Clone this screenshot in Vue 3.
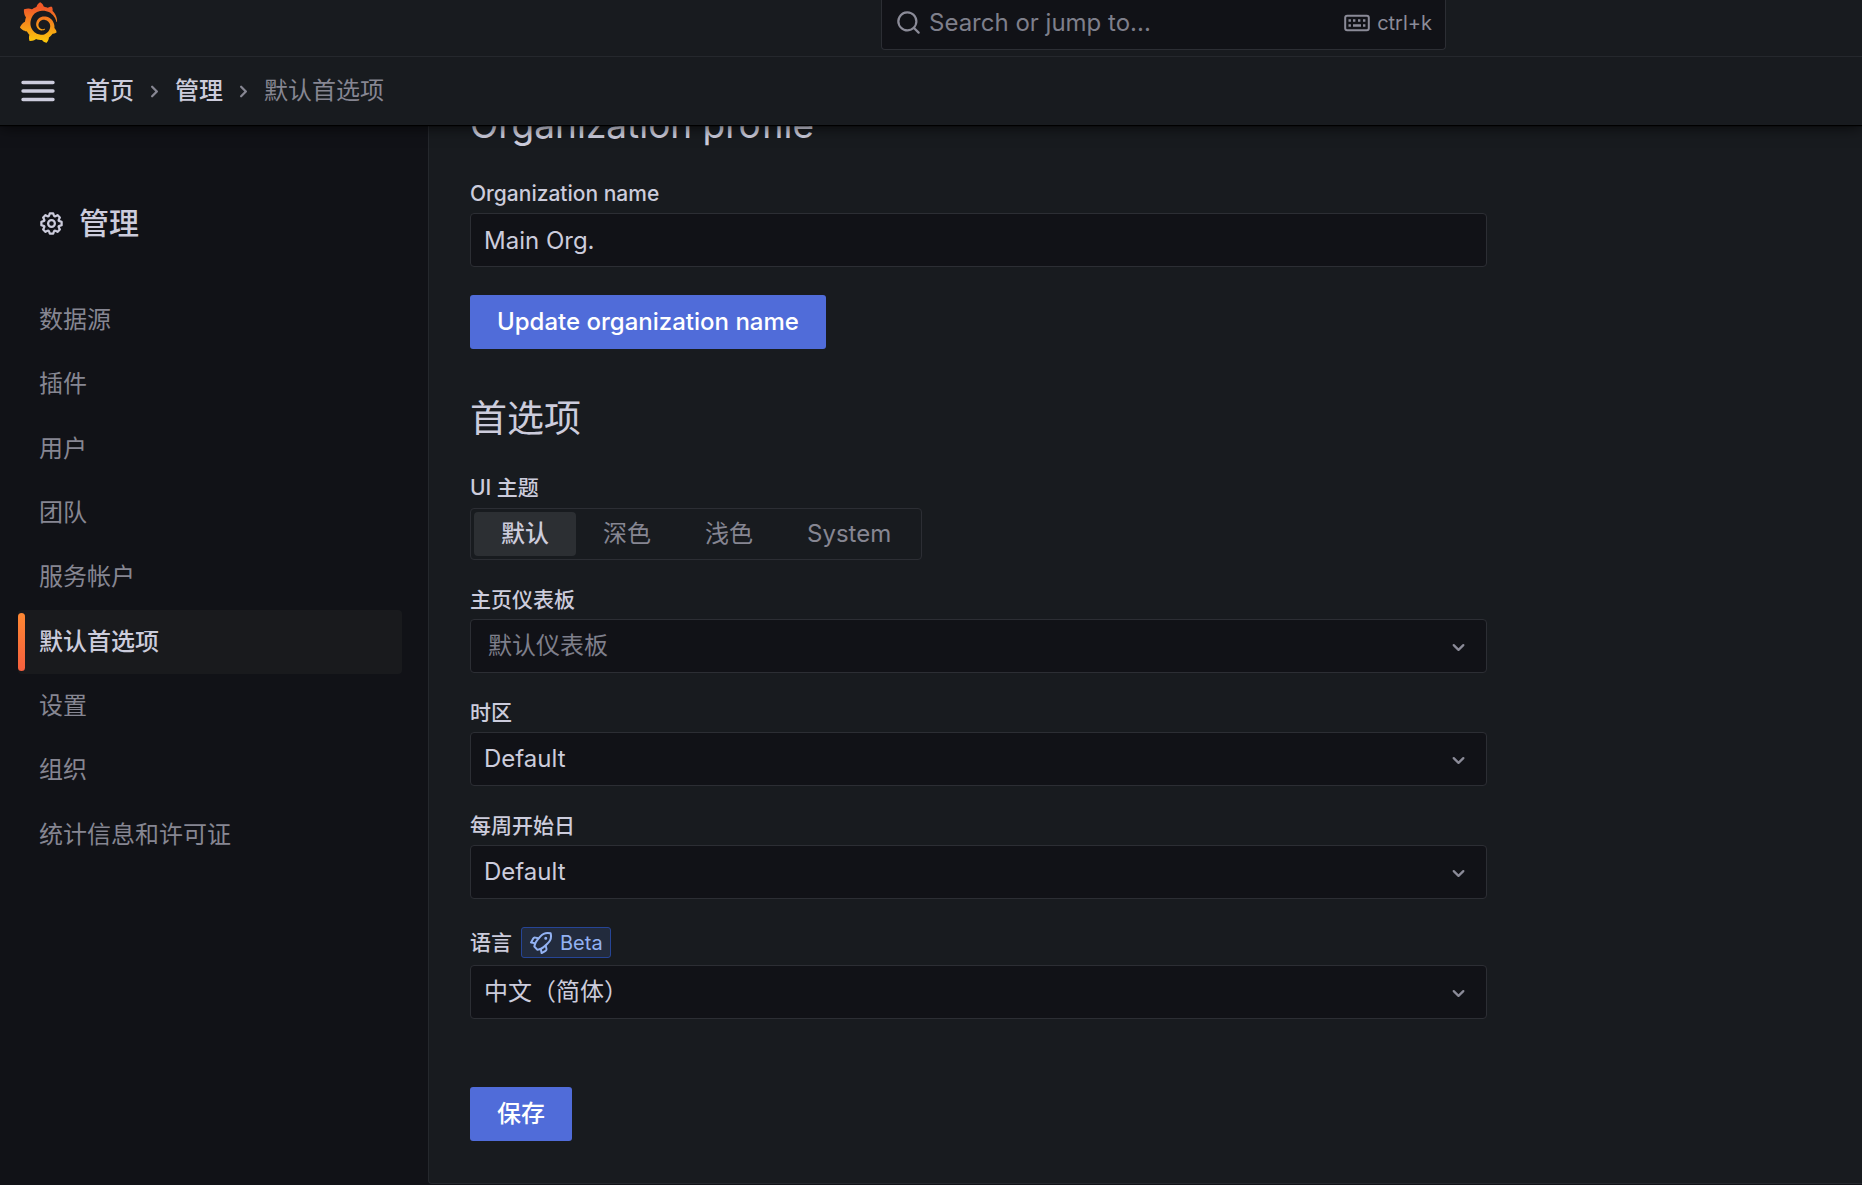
<template>
  <div class="app">
    <header class="top">
      <div class="top-bar">
        <a href="#" class="logo" aria-label="Grafana">
          <svg viewBox="0 0 351 365" width="39" height="41">
            <defs>
              <linearGradient id="logo-fill" x1="0" y1="1" x2="0" y2="0">
                <stop offset="0" stop-color="#fbca0a" />
                <stop offset="0.85" stop-color="#f05a28" />
              </linearGradient>
            </defs>
            <path fill="url(#logo-fill)" :d="logoPath" />
          </svg>
        </a>
        <label class="search">
          <svg class="icon" viewBox="0 0 24 24" width="27" height="27"><path :d="icons.search" /></svg>
          <input v-model="keyword" type="text" placeholder="Search or jump to..." aria-label="Search" />
          <span class="shortcut">
            <svg viewBox="0 0 26 18" width="26" height="18">
              <rect x="1.2" y="1.7" width="23.6" height="14.6" rx="2" fill="none" stroke="currentColor" stroke-width="2" />
              <path d="M4.5 6.5h2.4M9 6.5h2.4M14 6.5h2.4M19 6.5h2.4M4.5 11.5h2.4M9 11.5h8M19 11.5h2.4" fill="none" stroke="currentColor" stroke-width="2.4" />
            </svg>
            ctrl+k
          </span>
        </label>
      </div>
      <div class="crumb-bar">
        <button class="menu-btn" type="button" aria-label="菜单">
          <svg viewBox="0 0 34 22" width="34" height="22">
            <path d="M2 2.5h30M2 11h30M2 19.5h30" stroke="currentColor" stroke-width="3.4" stroke-linecap="round" />
          </svg>
        </button>
        <nav class="crumbs">
          <a href="#">首页</a>
          <svg viewBox="0 0 24 24" width="27" height="27"><path :d="icons.right" /></svg>
          <a href="#">管理</a>
          <svg viewBox="0 0 24 24" width="27" height="27"><path :d="icons.right" /></svg>
          <span>默认首选项</span>
        </nav>
      </div>
    </header>

    <div class="body">
      <aside class="sidebar">
        <h2 class="side-title">
          <svg viewBox="0 0 24 24" width="27" height="27"><path :d="icons.cog" /></svg>
          管理
        </h2>
        <ul class="side-list">
          <li v-for="item in navItems" :key="item">
            <a href="#" :class="{ active: item === activeItem }" @click.prevent="activeItem = item">{{ item }}</a>
          </li>
        </ul>
      </aside>

      <main class="panel">
        <form class="content" @submit.prevent>
          <h1>Organization profile</h1>
          <div class="field">
            <label for="org-name">Organization name</label>
            <input id="org-name" v-model="orgName" class="control" type="text" />
          </div>
          <button class="primary" type="submit">Update organization name</button>
        </form>

        <form class="content" @submit.prevent>
          <h1 class="second">首选项</h1>
          <fieldset class="field">
            <legend>UI 主题</legend>
            <div class="radio-group">
              <label v-for="t in themes" :key="t" :class="{ checked: theme === t }">
                <input v-model="theme" type="radio" name="theme" :value="t" />
                {{ t }}
              </label>
            </div>
          </fieldset>
          <div v-for="f in selects" :key="f.id" class="field">
            <div class="label-row">
              <label :for="f.id">{{ f.label }}</label>
              <span v-if="f.beta" class="badge">
                <svg viewBox="0 0 24 24" width="24" height="24"><path :d="icons.rocket" /></svg>
                Beta
              </span>
            </div>
            <div class="select-wrap">
              <select :id="f.id" v-model="f.value" class="control" :class="{ placeholder: f.placeholder }">
                <option>{{ f.value }}</option>
              </select>
              <svg class="arrow" viewBox="0 0 24 24" width="27" height="27"><path :d="icons.down" /></svg>
            </div>
          </div>
          <button class="primary save" type="submit">保存</button>
        </form>
      </main>
    </div>
  </div>
</template>

<script setup>
import { ref } from 'vue';

const keyword = ref('');
const orgName = ref('Main Org.');

const navItems = ['数据源', '插件', '用户', '团队', '服务帐户', '默认首选项', '设置', '组织', '统计信息和许可证'];
const activeItem = ref('默认首选项');

const themes = ['默认', '深色', '浅色', 'System'];
const theme = ref('默认');

const selects = ref([
  { id: 'home-dashboard', label: '主页仪表板', value: '默认仪表板', placeholder: true },
  { id: 'timezone', label: '时区', value: 'Default' },
  { id: 'week-start', label: '每周开始日', value: 'Default' },
  { id: 'language', label: '语言', value: '中文（简体）', beta: true },
]);

const icons = {
  search: 'M21.71,20.29,18,16.61A9,9,0,1,0,16.61,18l3.68,3.68a1,1,0,0,0,1.42,0A1,1,0,0,0,21.71,20.29ZM11,18a7,7,0,1,1,7-7A7,7,0,0,1,11,18Z',
  right: 'M14.83,11.29,10.59,7.05a1,1,0,0,0-1.42,0,1,1,0,0,0,0,1.41L12.71,12,9.17,15.54a1,1,0,0,0,0,1.41,1,1,0,0,0,.71.29,1,1,0,0,0,.71-.29l4.24-4.24A1,1,0,0,0,14.83,11.29Z',
  down: 'M17,9.17a1,1,0,0,0-1.41,0L12,12.71,8.46,9.17a1,1,0,0,0-1.41,0,1,1,0,0,0,0,1.42l4.24,4.24a1,1,0,0,0,1.42,0L17,10.59A1,1,0,0,0,17,9.17Z',
  cog: 'M21.32,9.55l-1.89-.63.89-1.78A1,1,0,0,0,20.13,6L18,3.87a1,1,0,0,0-1.15-.19l-1.78.89-.63-1.89A1,1,0,0,0,13.5,2h-3a1,1,0,0,0-.95.68L8.92,4.57,7.14,3.68A1,1,0,0,0,6,3.87L3.87,6a1,1,0,0,0-.19,1.15l.89,1.78-1.89.63A1,1,0,0,0,2,10.5v3a1,1,0,0,0,.68.95l1.89.63-.89,1.78A1,1,0,0,0,3.87,18L6,20.13a1,1,0,0,0,1.15.19l1.78-.89.63,1.89a1,1,0,0,0,.95.68h3a1,1,0,0,0,.95-.68l.63-1.89,1.78.89A1,1,0,0,0,18,20.13L20.13,18a1,1,0,0,0,.19-1.15l-.89-1.78,1.89-.63A1,1,0,0,0,22,13.5v-3A1,1,0,0,0,21.32,9.55ZM20,12.78l-1.2.4A2,2,0,0,0,17.64,16l.57,1.14-1.1,1.1L16,17.64a2,2,0,0,0-2.79,1.16l-.4,1.2H11.22l-.4-1.2A2,2,0,0,0,8,17.64l-1.14.57-1.1-1.1L6.36,16A2,2,0,0,0,5.2,13.18L4,12.78V11.22l1.2-.4A2,2,0,0,0,6.36,8L5.79,6.89l1.1-1.1L8,6.36A2,2,0,0,0,10.82,5.2l.4-1.2h1.56l.4,1.2A2,2,0,0,0,16,6.36l1.14-.57,1.1,1.1L17.64,8a2,2,0,0,0,1.16,2.79l1.2.4ZM12,8a4,4,0,1,0,4,4A4,4,0,0,0,12,8Zm0,6a2,2,0,1,1,2-2A2,2,0,0,1,12,14Z',
  rocket: 'M22.6 2.06a1 1 0 0 0-.71-.71A11.25 11.25 0 0 0 10.47 4.97L9.35 6.3 6.75 5.67a2.78 2.78 0 0 0-3.39 1.36l-2.2 3.9a1 1 0 0 0 .66 1.47l3.07.66a13.42 13.42 0 0 0-.55 2.43 1 1 0 0 0 .28.84l3.1 3.1a1 1 0 0 0 .71.29h.09a12.17 12.17 0 0 0 2.49-.49l.64 3a1 1 0 0 0 1.47.66l3.9-2.2a3.04 3.04 0 0 0 1.38-3.3l-.67-2.76 1.24-1.14A11.2 11.2 0 0 0 22.6 2.06ZM3.57 10.72l1.56-2.76a.83.83 0 0 1 1.07-.37l1.72.41-.65.77a13.1 13.1 0 0 0-1.59 2.4Zm12.47 8.23-2.71 1.53-.43-2.01a11.34 11.34 0 0 0 2.41-1.62l.74-.68.41 1.66a1.04 1.04 0 0 1-.42 1.12Zm1.62-6.97-3.69 3.39a9.77 9.77 0 0 1-5.17 2.3l-2.4-2.4a10.93 10.93 0 0 1 2.4-5.21l1.68-1.99.08-.09L11.99 6.27a9.28 9.28 0 0 1 8.81-3.12 9.22 9.22 0 0 1-3.14 8.83Zm-.92-6.16a1.5 1.5 0 1 0 1.5 1.5 1.5 1.5 0 0 0-1.5-1.5Z',
};

const logoPath = 'M342,161.2c-0.6-6.1-1.6-13.1-3.6-20.9c-2-7.7-5-16.2-9.4-25c-4.4-8.8-10.1-17.9-17.5-26.8c-2.9-3.5-6.1-6.9-9.5-10.2c5.1-20.3-6.2-37.9-6.2-37.9c-19.5-1.2-31.9,6.1-36.5,9.4c-0.8-0.3-1.5-0.7-2.3-1c-3.3-1.3-6.7-2.6-10.3-3.7c-3.5-1.1-7.1-2.1-10.8-3c-3.7-0.9-7.4-1.6-11.2-2.2c-0.7-0.1-1.3-0.2-2-0.3c-8.5-27.2-32.9-38.6-32.9-38.6c-27.3,17.3-32.4,41.5-32.4,41.5s-0.1,0.5-0.3,1.4c-1.5,0.4-3,0.9-4.5,1.3c-2.1,0.6-4.2,1.4-6.2,2.2c-2.1,0.8-4.1,1.6-6.2,2.5c-4.1,1.8-8.2,3.8-12.2,6c-3.9,2.2-7.7,4.6-11.4,7.1c-0.5-0.2-1-0.4-1-0.4c-37.8-14.4-71.3,2.9-71.3,2.9c-3.1,40.2,15.1,65.5,18.7,70.1c-0.9,2.5-1.7,5-2.5,7.5c-2.8,9.1-4.9,18.4-6.2,28.1c-0.2,1.4-0.4,2.8-0.5,4.2C18.8,192.7,8.5,228,8.5,228c29.1,33.5,63.1,35.6,63.1,35.6c0,0,0.1-0.1,0.1-0.1c4.3,7.7,9.3,15,14.9,21.9c2.4,2.9,4.8,5.6,7.4,8.3c-10.6,30.4,1.5,55.6,1.5,55.6c32.4,1.2,53.7-14.2,58.2-17.7c3.2,1.1,6.5,2.1,9.8,2.9c10,2.6,20.2,4.1,30.4,4.5c2.5,0.1,5.1,0.2,7.6,0.1l1.2,0l0.8,0l1.6,0l1.6-0.1l0,0.1c15.3,21.8,42.1,24.9,42.1,24.9c19.1-20.1,20.2-40.1,20.2-44.4l0,0c0,0,0-0.1,0-0.3c0-0.4,0-0.6,0-0.6l0,0c0-0.3,0-0.6,0-0.9c4-2.8,7.8-5.8,11.4-9.1c7.6-6.9,14.3-14.8,19.9-23.3c0.5-0.8,1-1.6,1.5-2.4c21.6,1.2,36.9-13.4,36.9-13.4c-3.6-22.5-16.4-33.5-19.1-35.6l0,0c0,0-0.1-0.1-0.3-0.2c-0.2-0.1-0.2-0.2-0.2-0.2c-0.1-0.1-0.3-0.2-0.5-0.3c0.1-1.4,0.2-2.7,0.3-4.1c0.2-2.4,0.2-4.9,0.2-7.3l0-1.8l0-0.9l0-0.5l-0.1-2.1l-0.1-2c0-0.7-0.1-1.3-0.2-1.9c-0.1-0.6-0.1-1.3-0.2-1.9l-0.2-1.9l-0.3-1.9c-0.4-2.5-0.8-4.9-1.4-7.4c-2.3-9.7-6.1-18.9-11-27.2c-5-8.3-11.2-15.6-18.3-21.8c-7-6.2-14.9-11.2-23.1-14.9c-8.3-3.7-16.9-6.1-25.5-7.2c-4.3-0.6-8.6-0.8-12.9-0.7l-3.2,0l-1.6,0.1c-0.6,0-1.2,0.1-1.7,0.1c-2.2,0.2-4.4,0.5-6.5,0.9c-8.6,1.6-16.7,4.7-23.8,9c-7.1,4.3-13.3,9.6-18.3,15.6c-5,6-8.9,12.7-11.6,19.6c-2.7,6.9-4.2,14.1-4.6,21c-0.1,1.7-0.1,3.5-0.1,5.2c0,0.4,0,0.9,0,1.3l0.1,1.4c0.1,0.8,0.1,1.7,0.2,2.5c0.3,3.5,1,6.9,1.9,10.1c1.9,6.5,4.9,12.4,8.6,17.4c3.7,5,8.2,9.1,12.9,12.4c4.7,3.2,9.8,5.5,14.8,7c5,1.5,10,2.1,14.7,2.1c1.8,0,3.5-0.1,5.5-0.2c1.5-0.2,3.3-0.5,5-0.8c1.1-0.2,2.1-0.6,3.1-0.9c2-0.7,4-1.5,5.7-2.4c1.8-0.9,3.4-2,5-3c0.4-0.3,0.9-0.6,1.3-1c1.6-1.3,1.9-3.7,0.6-5.3c-1.1-1.4-3.1-1.8-4.7-0.9c-0.4,0.2-0.8,0.4-1.2,0.6c-1.4,0.7-2.8,1.3-4.3,1.8c-1.5,0.5-3.1,0.9-4.7,1.2c-0.8,0.1-1.6,0.2-2.5,0.3c-1.7,0.1-3.3,0.1-5.2,0c-0.9,0-1.8-0.2-2.6-0.3c-3.7-0.5-7.4-1.6-10.9-3.2c-3.6-1.6-7-3.8-10.1-6.6c-3.1-2.8-5.8-6.1-7.9-9.9c-2.1-3.8-3.6-8-4.3-12.4c-0.3-2.2-0.5-4.5-0.4-6.7c0-1.2,0.1-2.3,0.2-3.5c0.1-1.2,0.3-2.4,0.5-3.6c1.7-9.6,6.5-19,13.9-26.1c1.9-1.8,3.9-3.4,6-4.9c2.1-1.5,4.4-2.8,6.8-3.9c2.4-1.1,4.8-2,7.4-2.7c2.5-0.7,5.1-1.1,7.8-1.4c1.3-0.1,2.6-0.2,4-0.2l2.7,0l1.4,0.1c2.9,0.2,5.7,0.6,8.5,1.3c5.6,1.2,11.1,3.3,16.2,6.1c10.2,5.7,18.9,14.5,24.2,25.1c2.7,5.3,4.6,11,5.5,16.9c0.2,1.5,0.4,3,0.5,4.5l0.2,2.2l0,4.3c0,0.7-0.1,1.9-0.1,2.6c-0.1,1.6-0.3,3.3-0.5,4.9c-0.2,1.6-0.5,3.2-0.8,4.8c-0.3,1.6-0.7,3.2-1.1,4.7c-0.8,3.1-1.8,6.2-3,9.3c-2.4,6-5.6,11.8-9.4,17.1c-7.7,10.6-18.2,19.2-30.2,24.7c-6,2.7-12.3,4.7-18.8,5.7c-3.2,0.6-6.5,0.9-9.8,1l-4.6,0c-1.8,0-3.5-0.1-5.3-0.3c-7-0.5-13.9-1.8-20.7-3.7c-6.7-1.9-13.2-4.6-19.4-7.8c-12.3-6.6-23.4-15.6-32-26.5c-4.3-5.4-8.1-11.3-11.2-17.4c-3.1-6.1-5.6-12.6-7.4-19.1c-1.8-6.6-2.9-13.3-3.4-20.1l-0.1-1.9l0-5.8c0-0.8,0-1.7,0-2.5c0.1-3.3,0.4-6.8,0.8-10.2c0.4-3.4,1-6.9,1.7-10.3c0.7-3.4,1.5-6.8,2.5-10.2c1.9-6.7,4.3-13.2,7.1-19.3c5.7-12.2,13.1-23.1,22-31.8c2.2-2.2,4.5-4.2,6.9-6.2c2.4-1.9,4.9-3.7,7.5-5.4c2.5-1.7,5.2-3.2,7.9-4.6c1.3-0.7,2.7-1.4,4.1-2c1.4-0.6,2.8-1.2,4.2-1.8c2.8-1.2,5.7-2.2,8.7-3.1c1.5-0.5,2.9-0.9,4.4-1.3c1.5-0.4,3-0.8,4.5-1.1c1.5-0.4,3-0.7,4.6-1c1.5-0.3,3-0.5,4.6-0.8c1.6-0.2,3.3-0.4,4.9-0.6c1.4-0.2,2.8-0.3,4.2-0.5l2.2-0.2c1.5-0.1,3-0.2,4.9-0.3c3.6-0.2,6.9-0.2,10-0.1c5.8,0.2,11.5,0.9,17,1.9c11.1,2.1,21.5,5.6,31,10.3c9.5,4.6,17.9,10.3,25.3,16.5c1.4,1.2,2.7,2.4,5.3,4.8c1.7,1.6,3.3,3.2,4.9,4.9c3.1,3.3,6,6.6,8.6,10c5.2,6.7,9.4,13.5,12.7,19.9c0.8,1.6,1.6,3.2,2.3,4.8c0.7,1.5,1.4,3,2.1,4.6c1.2,3,2.4,5.9,3.3,8.6c1.5,4.4,2.6,8.3,3.5,11.7c0.3,1.4,1.6,2.3,3,2.1c1.5-0.1,2.6-1.3,2.6-2.8C342.6,170.4,342.5,166.1,342,161.2z';
</script>

<style>
body {
  background: #111217;
}
</style>

<style scoped>
.app {
  display: flex;
  flex-direction: column;
  min-height: 100vh;
  background: #111217;
  color: #ccccdc;
  font-family: Inter, "Noto Sans CJK SC", sans-serif;
  font-size: 24px;
  line-height: 36px;
}

.app * {
  box-sizing: border-box;
}

svg {
  display: block;
  flex: none;
  fill: currentColor;
}

a {
  color: inherit;
  text-decoration: none;
}

button,
input,
select {
  font: inherit;
  color: inherit;
}

.top {
  position: relative;
  z-index: 1;
  background: #181b1f;
  box-shadow: 0 1px 1px #000, 0 2px 14px rgba(0, 0, 0, 0.7);
}

.top-bar {
  display: grid;
  grid-template-columns: 881fr 565fr 416fr;
  align-items: start;
  height: 57px;
  border-bottom: 1px solid #25282d;
}

.logo {
  padding: 2px 0 0 19px;
}

.search {
  display: flex;
  align-items: center;
  height: 50px;
  padding: 0 13px 4px;
  background: #111217;
  border: 1px solid #2c2e34;
  border-top: 0;
  border-radius: 0 0 4px 4px;
  color: #8b8b98;
}

.search input {
  flex: 1;
  min-width: 0;
  padding: 0;
  margin-left: 7px;
  border: 0;
  outline: 0;
  background: none;
}

.search input::placeholder {
  color: #7e7f8b;
  opacity: 1;
}

.shortcut {
  display: flex;
  align-items: center;
  gap: 7px;
  font-size: 20px;
}

.crumb-bar {
  display: flex;
  align-items: center;
  height: 68px;
  padding-left: 21px;
}

.menu-btn {
  padding: 0;
  border: 0;
  background: none;
  cursor: pointer;
}

.crumbs {
  display: flex;
  align-items: center;
  gap: 7px;
  margin-left: 31px;
  font-weight: 500;
}

.crumbs svg,
.crumbs span {
  color: #868692;
}

.crumbs span {
  font-weight: 400;
}

.body {
  display: flex;
  flex: 1;
}

.sidebar {
  flex: none;
  width: 428px;
  padding: 75px 26px 0 18px;
}

.side-title {
  display: flex;
  align-items: center;
  gap: 14px;
  margin: 0;
  padding-left: 20px;
  font-size: 30px;
  font-weight: 500;
  line-height: 46px;
}

.side-list {
  display: grid;
  grid-auto-rows: 1fr;
  height: 579px;
  margin: 42px 0 0;
  padding: 0;
  list-style: none;
}

.side-list a {
  position: relative;
  display: flex;
  align-items: center;
  height: 100%;
  padding-left: 21px;
  border-radius: 4px;
  color: #868692;
}

.side-list a.active {
  background: #191a1d;
  color: #ccccdc;
  font-weight: 500;
}

.side-list a.active::before {
  content: "";
  position: absolute;
  top: 3px;
  bottom: 3px;
  left: 0;
  width: 7px;
  border-radius: 4px;
  background: linear-gradient(#ff8833, #f55f3e);
}

/* 内容区向上滚动了一段，标题被顶栏遮住一部分 */
.panel {
  flex: 1;
  min-width: 0;
  margin: -23px 0 1px;
  padding: 0 41px 40px;
  background: #181b1f;
  border: 1px solid #25282d;
  border-width: 0 0 1px 1px;
  border-radius: 0 0 0 4px;
}

.content {
  max-width: 1017px;
}

h1 {
  margin: 0 0 34px;
  font-size: 37px;
  font-weight: 400;
  line-height: 46px;
}

h1.second {
  margin-top: 47px;
}

.field {
  margin: 0 0 28px;
  padding: 0;
  border: 0;
}

.field > label,
legend,
.label-row {
  display: flex;
  align-items: center;
  gap: 9px;
  margin-bottom: 7px;
  padding: 0;
  font-size: 21px;
  font-weight: 500;
  line-height: 24px;
}

legend {
  margin-bottom: 8px;
}

.control {
  display: block;
  width: 100%;
  height: 54px;
  padding: 0 13px;
  background: #111217;
  border: 1px solid #2c2e34;
  border-radius: 4px;
  outline: 0;
}

.control:focus,
.primary:focus-visible {
  border-color: #6e9fff;
}

.select-wrap {
  position: relative;
}

select.control {
  appearance: none;
  padding-right: 48px;
}

select.placeholder {
  padding-left: 17px;
  color: #7e7f8b;
}

.arrow {
  position: absolute;
  top: 15px;
  right: 15px;
  color: #8b8b98;
  pointer-events: none;
}

.radio-group {
  display: inline-flex;
  padding: 3px;
  border: 1px solid #2c2e34;
  border-radius: 4px;
  vertical-align: top;
}

.radio-group label {
  height: 44px;
  padding: 0 27px;
  border-radius: 4px;
  color: #868692;
  line-height: 44px;
  cursor: pointer;
}

.radio-group label.checked {
  background: #2c2f33;
  color: #ccccdc;
  font-weight: 500;
}

.radio-group input {
  position: absolute;
  opacity: 0;
  pointer-events: none;
}

.badge {
  display: flex;
  align-items: center;
  gap: 7px;
  height: 31px;
  padding: 0 7px;
  background: #222b3d;
  border: 1px solid #264596;
  border-radius: 3px;
  color: #93b2f2;
  font-size: 20px;
  font-weight: 400;
}

.primary {
  display: block;
  height: 54px;
  padding: 0 26px;
  border: 1px solid transparent;
  border-radius: 3px;
  background: #506cd9 border-box;
  color: #fff;
  font-weight: 500;
  cursor: pointer;
}

.save {
  margin-top: 68px;
}
</style>
